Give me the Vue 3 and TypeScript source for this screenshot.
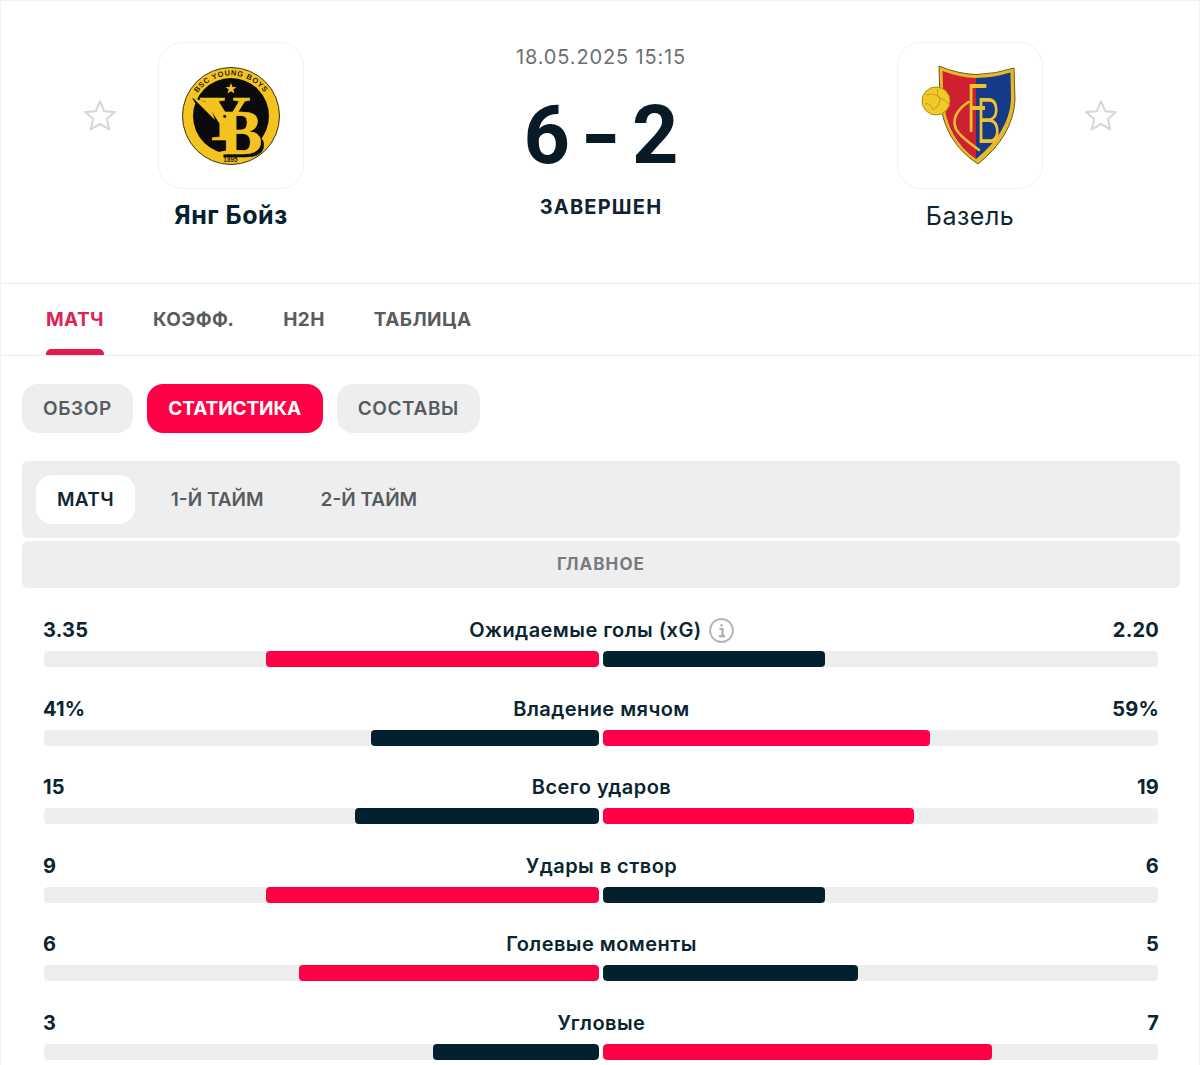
<script setup lang="ts">
interface Stat { label: string; left: string; right: string; a: number; b: number; info?: boolean }
const stats: Stat[] = [
  { label: 'Ожидаемые голы (xG)', left: '3.35', right: '2.20', a: 60, b: 40, info: true },
  { label: 'Владение мячом', left: '41%', right: '59%', a: 41, b: 59 },
  { label: 'Всего ударов', left: '15', right: '19', a: 44, b: 56 },
  { label: 'Удары в створ', left: '9', right: '6', a: 60, b: 40 },
  { label: 'Голевые моменты', left: '6', right: '5', a: 54, b: 46 },
  { label: 'Угловые', left: '3', right: '7', a: 30, b: 70 },
]
const starPath = 'M16 3.2l3.7 8.6 9.3.8-7 6.1 2.1 9.1L16 23l-8.1 4.8 2.1-9.1-7-6.1 9.3-.8z'
</script>

<template>
  <div class="page">
    <header class="head">
      <div class="side">
        <svg class="star" viewBox="2 2 28 28"><path :d="starPath" /></svg>
        <div class="team">
          <div class="logo">
            <svg width="112" height="112" viewBox="0 0 112 112" class="crest-yb">
              <defs><path id="ybarc" d="M56 56m-40.5 0a40.5 40.5 0 0 1 81 0" /></defs>
              <circle cx="56" cy="56" r="48.5" fill="#f4c320" stroke="#3a3112" stroke-width="1" />
              <circle cx="56" cy="56" r="38" fill="#0b0b0b" />
              <text class="yb-ring"><textPath href="#ybarc" startOffset="50%" text-anchor="middle">BSC YOUNG BOYS</textPath></text>
              <text x="55.5" y="102" class="yb-year" text-anchor="middle">1895</text>
              <polygon points="56,23 57.5,27 61.500,27 58.300,29.600 59.500,33.500 56,31.200 52.500,33.500 53.700,29.600 50.500,27 54.500,27" fill="#f4c320" />
              <path d="M17 38l20 7 6 26-10-8z" fill="#0b0b0b" />
              <path d="M18 38L34 43L40 60Z" fill="#f4c320" />
              <text x="50" y="80" class="yb-l" text-anchor="middle" textLength="52" lengthAdjust="spacingAndGlyphs">Y</text>
              <text x="69" y="96.500" class="yb-b yb-shadow" text-anchor="middle">B</text>
              <text x="66" y="94" class="yb-b" text-anchor="middle">B</text>
            </svg>
          </div>
          <div class="name strong">Янг Бойз</div>
        </div>
      </div>

      <div class="center">
        <div class="date">18.05.2025 15:15</div>
        <div class="score"><span>6</span><span class="dash">-</span><span>2</span></div>
        <div class="status">ЗАВЕРШЕН</div>
      </div>

      <div class="side">
        <div class="team">
          <div class="logo">
            <svg width="108" height="112" viewBox="0 0 108 112">
              <path d="M23 6Q42 14 60 14.500Q80 14 98 8L99 40Q97 76 62 104Q28 82 24 40z" fill="#e6b92a" stroke="#6b5a1a" stroke-width="1" />
              <path d="M26.500 11Q44 17.500 60 18V99Q31 79 27.500 40z" fill="#cf2030" />
              <path d="M60 18Q78 17.500 94.500 12.500L95 40Q93 72 60 99z" fill="#143a88" />
              <path d="M52.500 42C40 50 36 60 40 69C44 77 53 82 63 90" fill="none" stroke="#efc232" stroke-width="2.600" stroke-linecap="round" />
              <text x="50" y="72" class="fb-l" font-size="66" textLength="23" lengthAdjust="spacingAndGlyphs">F</text>
              <text x="60" y="83" class="fb-l" font-size="62" textLength="25" lengthAdjust="spacingAndGlyphs">B</text>
              <circle cx="20" cy="41" r="14" fill="#f0cb28" stroke="#a88c1c" stroke-width="1" />
              <path d="M10 35Q18 32 24 38M22 29Q20 36 24 38M24 38Q24 46 17 50M24 38Q30 40 33 44M9 44Q14 42 17 50" fill="none" stroke="#a88c1c" stroke-width="0.700" />
            </svg>
          </div>
          <div class="name">Базель</div>
        </div>
        <svg class="star" viewBox="2 2 28 28"><path :d="starPath" /></svg>
      </div>
    </header>

    <nav class="nav">
      <a class="nav-item on">МАТЧ</a>
      <a class="nav-item">КОЭФФ.</a>
      <a class="nav-item">Н2Н</a>
      <a class="nav-item">ТАБЛИЦА</a>
    </nav>

    <div class="pills">
      <button class="pill">ОБЗОР</button>
      <button class="pill on">СТАТИСТИКА</button>
      <button class="pill">СОСТАВЫ</button>
    </div>

    <div class="periods">
      <button class="period on">МАТЧ</button>
      <button class="period">1-Й ТАЙМ</button>
      <button class="period">2-Й ТАЙМ</button>
    </div>
    <div class="section">ГЛАВНОЕ</div>

    <section class="stats">
      <div v-for="s in stats" :key="s.label" class="stat">
        <div class="stat-top">
          <span class="val">{{ s.left }}</span>
          <span class="label">
            {{ s.label }}
            <svg v-if="s.info" class="info" viewBox="0 0 24 24">
              <circle cx="12" cy="12" r="11" fill="none" stroke="#b4b4b4" stroke-width="1.800" />
              <path d="M10 10.500h3v7M9.500 17.500h6M12 6v2.200" fill="none" stroke="#a8a8a8" stroke-width="2" />
            </svg>
          </span>
          <span class="val">{{ s.right }}</span>
        </div>
        <div class="bars">
          <div class="half left"><div class="fill" :class="{ red: s.a > s.b }" :style="{ width: s.a + '%' }"></div></div>
          <div class="half"><div class="fill" :class="{ red: s.b > s.a }" :style="{ width: s.b + '%' }"></div></div>
        </div>
      </div>
    </section>
  </div>
</template>

<style>
html, body { margin: 0; background: #fff; }
</style>

<style scoped>
.page {
  width: 1200px;
  height: 1065px;
  overflow: hidden;
  box-sizing: border-box;
  background: #fff;
  border-top: 1px solid #f0f0f0;
  border-left: 1px solid #f2f2f2;
  border-right: 1px solid #f2f2f2;
  font-family: Inter, "Noto Sans", sans-serif;
  color: #03202f;
}
.head {
  height: 283px;
  box-sizing: border-box;
  padding: 41px 82px 0 83px;
  display: flex;
  justify-content: space-between;
  border-bottom: 1px solid #eeeeee;
}
.side { display: flex; gap: 42px; align-items: flex-start; width: 220px; }
.star { width: 32px; height: 32px; margin-top: 58px; flex: none; }
.star path { fill: #fff; stroke: #d6d6d6; stroke-width: 1.8; stroke-linejoin: round; }
.team { width: 146px; display: flex; flex-direction: column; align-items: center; }
.logo {
  width: 146px;
  height: 147px;
  box-sizing: border-box;
  border: 1.5px solid #f1f1f1;
  border-radius: 24px;
  display: flex;
  align-items: center;
  justify-content: center;
}
.crest-yb text { font-family: "Liberation Serif", serif; }
.crest-yb .yb-ring { font-family: "Liberation Sans", sans-serif; font-size: 7.5px; font-weight: 700; fill: #2a2410; letter-spacing: 0.7px; }
.crest-yb .yb-year { font-family: "Liberation Sans", sans-serif; font-size: 6.5px; font-weight: 700; fill: #2a2410; }
.yb-l { font-size: 64px; font-weight: 700; fill: #f4c320; stroke: #f4c320; stroke-width: 0.6px; }
.yb-b { font-size: 64px; font-weight: 700; fill: #f4c320; stroke: #f4c320; stroke-width: 0.6px; }
.crest-yb .yb-shadow { fill: #0b0b0b; stroke: #0b0b0b; }
.fb-l { font-family: Inter, sans-serif; font-weight: 300; fill: #efc232; }
.name { margin-top: 12px; font-size: 25px; line-height: 30px; letter-spacing: 0.5px; white-space: nowrap; color: #0d2530; }
.name.strong { margin-top: 11px; font-weight: 700; color: #03202f; }
.center { flex: 1; display: flex; flex-direction: column; align-items: center; padding-left: 1px; }
.date { margin-top: 1px; font-size: 20px; line-height: 28px; letter-spacing: 0.85px; color: #6c6f72; white-space: nowrap; }
.score {
  margin-top: 25px;
  height: 80px;
  display: flex;
  gap: 14px;
  justify-content: center;
  font-family: Roboto, sans-serif;
  font-weight: 700;
  font-size: 81px;
  line-height: 80px;
  color: #071a26;
}
.dash { width: 34px; text-align: center; transform: scaleX(1.3); }
.status { margin-top: 17px; font-size: 20px; line-height: 28px; font-weight: 700; letter-spacing: 1.2px; color: #10232e; }
.nav {
  height: 72px;
  box-sizing: border-box;
  padding-left: 45px;
  display: flex;
  gap: 49px;
  border-bottom: 1px solid #eeeeee;
}
.nav-item {
  position: relative;
  line-height: 71px;
  font-size: 19px;
  font-weight: 700;
  letter-spacing: 0.4px;
  color: #565c60;
}
.nav-item.on { color: #dd2355; }
.nav-item.on::after {
  content: "";
  position: absolute;
  left: 0;
  right: 0;
  bottom: 0;
  height: 6px;
  border-radius: 5px 5px 0 0;
  background: #e6194f;
}
.pills { display: flex; gap: 14px; padding: 28px 0 0 21px; }
button { font-family: inherit; border: 0; padding: 0; cursor: pointer; }
.pill {
  height: 49px;
  padding: 0 21px;
  border-radius: 16px;
  background: #eeeeee;
  color: #555b5f;
  font-size: 19px;
  font-weight: 600;
  letter-spacing: 0.6px;
}
.pill.on { background: #ff0046; color: #fff; letter-spacing: -0.1px; padding: 0 21.5px; font-weight: 700; }
.periods {
  margin: 28px 19px 0 21px;
  height: 77px;
  box-sizing: border-box;
  padding: 14px;
  display: flex;
  gap: 1px;
  background: #eeeeee;
  border-radius: 6px;
}
.period {
  height: 49px;
  padding: 0 21px;
  border-radius: 16px;
  background: transparent;
  color: #555b5f;
  font-size: 19px;
  font-weight: 600;
  letter-spacing: 0;
  margin-right: 14px;
}
.period.on { background: #fff; color: #10262f; letter-spacing: 0.3px; }
.section {
  margin: 3px 19px 0 21px;
  height: 47px;
  line-height: 47px;
  text-align: center;
  background: #eeeeee;
  border-radius: 6px;
  font-size: 17px;
  font-weight: 700;
  letter-spacing: 1.1px;
  color: #777b7e;
}
.stats {
  margin: 27px 41px 0 43px;
  display: flex;
  flex-direction: column;
  gap: 26.6px;
}
.stat { height: 52px; display: flex; flex-direction: column; justify-content: space-between; }
.stat-top { height: 30px; display: flex; justify-content: space-between; align-items: center; position: relative; margin: 0 -1px 0 -1px; }
.val { font-size: 20px; font-weight: 700; letter-spacing: 0.2px; color: #0a2530; }
.label {
  position: absolute;
  left: 1px;
  right: 0;
  top: 0;
  height: 30px;
  display: flex;
  align-items: center;
  justify-content: center;
  gap: 7px;
  font-size: 20px;
  font-weight: 600;
  letter-spacing: 0.45px;
  color: #0a2530;
}
.info { width: 25px; height: 25px; }
.bars { display: flex; gap: 4px; height: 16px; }
.half { flex: 1; display: flex; background: #eeeeee; border-radius: 4px; overflow: hidden; }
.half.left { justify-content: flex-end; }
.fill { background: #03202f; border-radius: 4px; }
.fill.red { background: #ff0046; }
</style>
